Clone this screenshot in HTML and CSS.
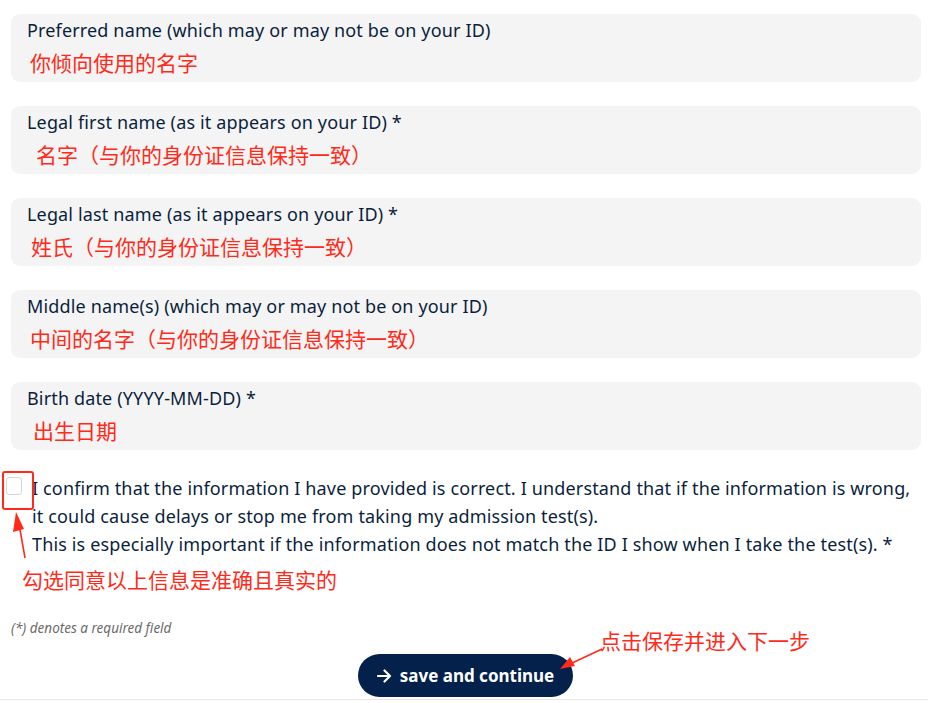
FILE: index.html
```html
<!DOCTYPE html>
<html>
<head>
<meta charset="utf-8">
<link rel="stylesheet" href="styles.css">
</head>
<body>
<div class="page">
  <div class="fields">
    <div class="field">
      <div class="label">Preferred name (which may or may not be on your ID)</div>
      <div class="ann a1">你倾向使用的名字</div>
    </div>
    <div class="field">
      <div class="label">Legal first name (as it appears on your ID) *</div>
      <div class="ann a2">名字（与你的身份证信息保持一致）</div>
    </div>
    <div class="field">
      <div class="label">Legal last name (as it appears on your ID) *</div>
      <div class="ann a3">姓氏（与你的身份证信息保持一致）</div>
    </div>
    <div class="field">
      <div class="label">Middle name(s) (which may or may not be on your ID)</div>
      <div class="ann a4">中间的名字（与你的身份证信息保持一致）</div>
    </div>
    <div class="field">
      <div class="label">Birth date (YYYY-MM-DD) *</div>
      <div class="ann a5">出生日期</div>
    </div>
  </div>

  <div class="confirm">
    <div class="box-wrap">
      <span class="checkbox"></span>
      <span class="red-frame"></span>
      <svg class="up-arrow" width="20" height="50" viewBox="0 0 20 50">
        <line x1="15" y1="48" x2="9" y2="14" stroke="#ff2a1a" stroke-width="1.6"/>
        <polygon points="6,2 3,22 14,19" fill="#ff2a1a"/>
      </svg>
    </div>
    <p class="confirm-text">I confirm that the information I have provided is correct. I understand that if the information is wrong, it could cause delays or stop me from taking my admission test(s).<br>This is especially important if the information does not match the ID I show when I take the test(s). *</p>
  </div>
  <div class="ann a6">勾选同意以上信息是准确且真实的</div>

  <div class="required">(*) denotes a required field</div>

  <div class="actions">
    <button class="save">
      <svg class="btn-arrow" width="15" height="14" viewBox="0 0 15 14">
        <path d="M1 7 H13 M7.5 1.5 L13 7 L7.5 12.5" fill="none" stroke="#ffffff" stroke-width="2.2" stroke-linecap="round" stroke-linejoin="round"/>
      </svg>
      <span>save and continue</span>
    </button>
    <div class="callout">
      <svg class="left-arrow" width="48" height="24" viewBox="0 0 48 24">
        <line x1="44" y1="2" x2="12" y2="17" stroke="#ff2a1a" stroke-width="1.6"/>
        <polygon points="2,22 12,10 17,19" fill="#ff2a1a"/>
      </svg>
      <span class="ann a7">点击保存并进入下一步</span>
    </div>
  </div>
</div>
</body>
</html>
```

FILE: styles.css
```css
html, body {
  margin: 0;
  padding: 0;
  background: #ffffff;
}
body {
  font-family: "Noto Sans", "Open Sans", sans-serif;
  color: #0b1f3d;
}
.page {
  width: 928px;
  height: 703px;
  overflow: hidden;
  position: relative;
}
.fields {
  display: flex;
  flex-direction: column;
  gap: 24px;
  padding: 14px 7px 0 11px;
}
.field {
  height: 68px;
  box-sizing: border-box;
  background: #f4f4f4;
  border-radius: 9px;
  padding: 4px 0 0 16px;
}
.label {
  font-size: 18px;
  line-height: 24px;
  letter-spacing: 0.15px;
  color: #0b1f3d;
}
.ann {
  font-family: "Noto Sans CJK SC", sans-serif;
  color: #ff2a1a;
  font-size: 21px;
  line-height: 26px;
}
.field .ann {
  margin-top: 7px;
}
.a1 { padding-left: 3px; }
.a2 { padding-left: 9px; }
.a3 { padding-left: 4px; }
.a4 { padding-left: 3px; }
.a5 { padding-left: 6px; }

.confirm {
  display: flex;
  margin-top: 24px;
  padding-left: 6px;
}
.box-wrap {
  position: relative;
  width: 26px;
  flex: none;
}
.checkbox {
  display: block;
  margin-top: 3px;
  width: 14px;
  height: 16px;
  border: 1px solid #d4d4d8;
  border-radius: 3px;
  background: #fff;
}
.red-frame {
  position: absolute;
  left: -4px;
  top: -3px;
  width: 28px;
  height: 35px;
  border: 2px solid #ff2a1a;
  border-radius: 3px;
}
.up-arrow {
  position: absolute;
  left: 4px;
  top: 36px;
}
.confirm-text {
  margin: 0;
  font-size: 18px;
  line-height: 28px;
  letter-spacing: 0.15px;
  color: #0b1f3d;
  width: 884px;
}
.a6 {
  margin-top: 8px;
  padding-left: 22px;
}
.required {
  margin-top: 27px;
  padding-left: 11px;
  font-size: 13.5px;
  font-style: italic;
  color: #6b6b6b;
  line-height: 18px;
}
.actions {
  position: relative;
  display: flex;
  justify-content: center;
  margin-top: 17px;
  padding-left: 3px;
  height: 45px;
  border-bottom: 1px solid #e6e6e6;
}
.save {
  width: 215px;
  height: 43px;
  border: none;
  border-radius: 22px;
  background: #03214a;
  color: #ffffff;
  font-family: "Noto Sans", sans-serif;
  font-weight: 700;
  font-size: 17px;
  letter-spacing: 0;
  padding: 0;
  display: flex;
  align-items: center;
  justify-content: center;
  gap: 8px;
}
.btn-arrow {
  flex: none;
}
.callout {
  position: absolute;
  left: 558px;
  top: -27px;
  display: flex;
  align-items: flex-start;
}
.left-arrow {
  margin-top: 20px;
  margin-right: -6px;
}
.a7 {
  font-size: 21px;
  line-height: 26px;
}
```
